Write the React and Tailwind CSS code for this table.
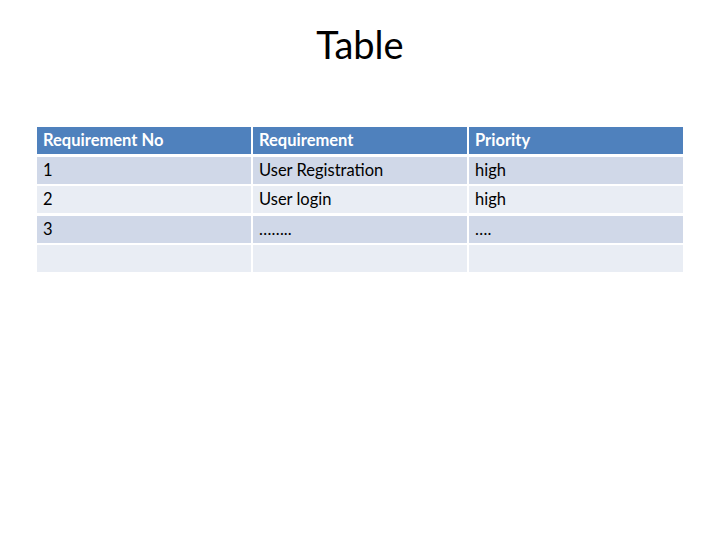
export default function App() {
  const rows = [
    ["1", "User Registration", "high"],
    ["2", "User login", "high"],
    ["3", "……..", "…."],
    ["", "", ""],
  ];
  return (
    <div className="w-[720px] h-[540px] bg-white relative" style={{ fontFamily: "Lato, 'Open Sans', sans-serif" }}>
      <div className="pt-[21px] flex justify-center">
        <h1 className="text-[38px] leading-[46px] text-black font-normal">Table</h1>
      </div>
      <div className="ml-[37px] mt-[60px] w-[646px] grid grid-cols-3 gap-x-[2px] gap-y-[2.5px]">
        {["Requirement No", "Requirement", "Priority"].map((h) => (
          <div key={h} className="h-[27px] bg-[#4F81BD] text-white font-bold text-[16.5px] pl-[6px] flex items-center">
            {h}
          </div>
        ))}
        {rows.map((r, i) =>
          r.map((c, j) => (
            <div
              key={i + "-" + j}
              className={`h-[27px] text-black text-[16.5px] pl-[6px] flex items-center ${i % 2 === 0 ? "bg-[#D0D8E8]" : "bg-[#E9EDF4]"}`}
            >
              {c}
            </div>
          ))
        )}
      </div>
    </div>
  );
}
